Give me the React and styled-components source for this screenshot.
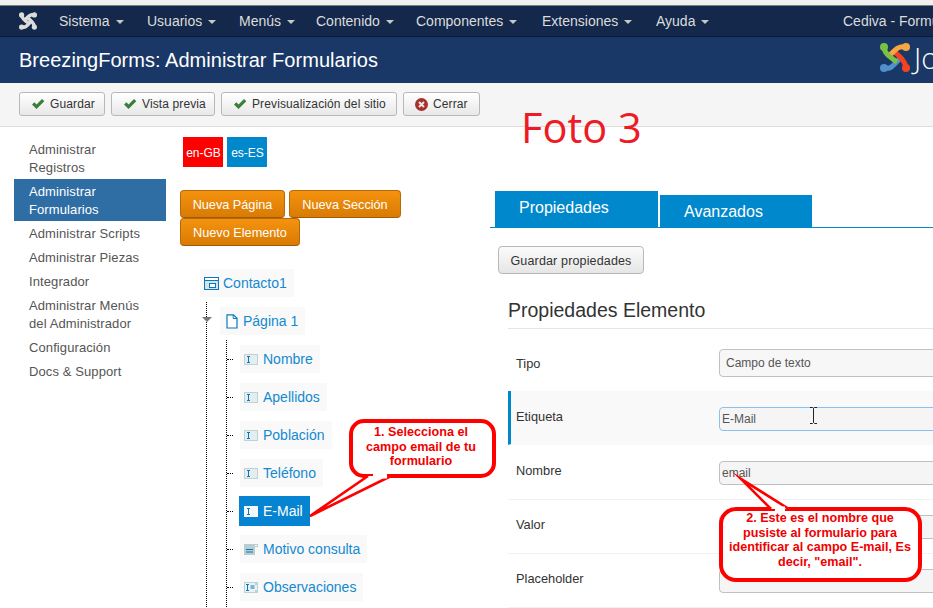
import React from "react";
import styled, { createGlobalStyle } from "styled-components";

const Global = createGlobalStyle`
  html, body { margin: 0; padding: 0; background: #fff; overflow: hidden; }
  body { font-family: "Liberation Sans", Arial, sans-serif; }
  * { box-sizing: border-box; }
  ul { list-style: none; margin: 0; padding: 0; }
`;

const Page = styled.div`
  position: relative;
  width: 933px;
  height: 608px;
  overflow: hidden;
  background: #fff;
`;
const BrowserEdge = styled.div`
  height: 6px;
  background: #f0f0f0;
  border-bottom: 1px solid #7d7d7d;
`;
const Navbar = styled.nav`
  height: 31px;
  display: flex;
  align-items: center;
  background: #13284a;
  border-bottom: 1px solid #0c1b33;
  color: #dcdcdc;
  font-size: 14px;
  padding-left: 19px;
  white-space: nowrap;
`;
const NavLogo = styled.svg`
  width: 18px;
  height: 18px;
  flex: none;
  margin-right: 22px;
`;
const NavItem = styled.span`
  display: inline-flex;
  align-items: center;
  width: ${(p) => p.$w}px;
  flex: none;
`;
const Caret = styled.i`
  display: inline-block;
  margin-left: 6px;
  margin-top: 2px;
  border-left: 4px solid transparent;
  border-right: 4px solid transparent;
  border-top: 4px solid #c8c8c8;
`;
const NavRight = styled.span`
  margin-left: 73px;
`;
const TitleBar = styled.header`
  height: 46px;
  display: flex;
  align-items: center;
  background: #1a3867;
  color: #fff;
  padding-left: 19px;
  white-space: nowrap;
`;
const PageTitle = styled.h1`
  margin: 0;
  font-size: 20px;
  letter-spacing: 0.03px;
  font-weight: 400;
  width: 861px;
  flex: none;
`;
const BrandLogo = styled.svg`
  width: 30px;
  height: 31px;
  flex: none;
  margin-bottom: 6px;
`;
const BrandText = styled.span`
  font-family: "Open Sans", sans-serif;
  font-weight: 300;
  font-size: 29px;
  margin-left: 4px;
  margin-bottom: 5px;
`;
const Toolbar = styled.div`
  height: 44px;
  display: flex;
  align-items: flex-start;
  gap: 6px;
  background: #f5f5f5;
  border-bottom: 1px solid #dedede;
  padding: 9px 0 0 19px;
`;
const ToolButton = styled.button`
  height: 24px;
  width: ${(p) => p.$w}px;
  display: inline-flex;
  align-items: center;
  gap: 5px;
  padding: 0 0 0 11px;
  font: 12px "Liberation Sans", Arial, sans-serif;
  letter-spacing: 0.12px;
  color: #333;
  background: linear-gradient(#ffffff, #e8e8e8);
  border: 1px solid #b8b8b8;
  border-radius: 3px;
  white-space: nowrap;
`;
const Main = styled.div`
  display: flex;
  align-items: flex-start;
`;
const Sidebar = styled.ul`
  width: 166px;
  flex: none;
  padding: 10px 0 0 14px;
`;
const SideItem = styled.li`
  padding: 4px 15px 2px;
  line-height: 18px;
  font-size: 13px;
  letter-spacing: 0.1px;
  color: ${(p) => (p.$active ? "#fff" : "#555")};
  background: ${(p) => (p.$active ? "#2f6ea5" : "transparent")};
`;
const Builder = styled.div`
  width: 324px;
  flex: none;
  padding: 10px 0 0 14px;
`;
const LangRow = styled.div`
  display: flex;
  gap: 4px;
  padding-left: 3px;
`;
const Lang = styled.span`
  width: 40px;
  height: 30px;
  display: flex;
  align-items: center;
  justify-content: center;
  padding: 1px 0 0 1px;
  font-size: 12px;
  color: #fff;
  background: ${(p) => p.$bg};
`;
const ActionRow = styled.div`
  display: flex;
  flex-wrap: wrap;
  column-gap: 4px;
  width: 225px;
  margin-top: 23px;
`;
const OrangeButton = styled.button`
  width: ${(p) => p.$w}px;
  height: 28px;
  padding: 1px 0 0;
  font: 12.7px "Liberation Sans", Arial, sans-serif;
  color: #fff;
  background: linear-gradient(#f5930f, #d97b04);
  border: 1px solid #b56a08;
  border-bottom-color: #a05c05;
  border-radius: 4px;
  white-space: nowrap;
`;
const Tree = styled.div`
  margin: 23px 0 0 20px;
`;
const Branch = styled.ul`
  position: relative;
  margin: 5px 0 0 6px;
  padding: 5px 0 30px 13px;
  border-left: 1px dotted #000;
`;
const Leaf = styled.li`
  position: relative;
  height: 28px;
  margin-bottom: 10px;
  &::before {
    content: "";
    position: absolute;
    left: -13px;
    top: 14px;
    width: 6px;
    border-top: 1px dotted #000;
  }
`;
const Node = styled.span`
  display: inline-flex;
  align-items: center;
  gap: ${(p) => p.$gap || 5}px;
  height: ${(p) => (p.$selected ? 30 : 28)}px;
  margin: ${(p) => (p.$selected ? "-1px 0 0 -1px" : 0)};
  padding: 0 7px 0 ${(p) => p.$pad || (p.$selected ? 5 : 4)}px;
  font-size: 14px;
  color: ${(p) => (p.$selected ? "#fff" : "#1489d0")};
  background: ${(p) => (p.$selected ? "#0784d1" : "#f9f9f9")};
  white-space: nowrap;
`;
const Arrow = styled.i`
  position: absolute;
  left: -5px;
  top: 15px;
  border-left: 5px solid transparent;
  border-right: 5px solid transparent;
  border-top: 5px solid #777;
`;
const Icon = styled.svg`
  flex: none;
  display: block;
`;
const Properties = styled.div`
  flex: 1;
  min-width: 0;
  padding-top: 64px;
`;
const Tabs = styled.div`
  display: flex;
  align-items: flex-end;
  gap: 2px;
  padding-left: 5px;
  border-bottom: 1px solid #0088cc;
  height: 37px;
`;
const Tab = styled.div`
  width: ${(p) => p.$w}px;
  height: ${(p) => p.$h}px;
  padding: 8px 0 0 24px;
  font-size: 16px;
  line-height: 18px;
  color: #fff;
  background: #0088cc;
`;
const SaveButton = styled.button`
  display: block;
  width: 146px;
  height: 28px;
  margin: 18px 0 0 8px;
  padding: 1px 0 0;
  font: 12.5px "Liberation Sans", Arial, sans-serif;
  letter-spacing: 0.15px;
  color: #333;
  background: linear-gradient(#fbfbfb, #e6e6e6);
  border: 1px solid #b8b8b8;
  border-radius: 4px;
`;
const Panel = styled.div`
  padding-left: 18px;
`;
const Heading = styled.h2`
  margin: 24px 0 9px;
  padding-bottom: 6px;
  font-size: 19.5px;
  line-height: 24px;
  font-weight: 400;
  color: #333;
  border-bottom: 1px solid #e5e5e5;
`;
const Row = styled.div`
  display: flex;
  align-items: flex-start;
  height: ${(p) => p.$h || 54}px;
  padding: ${(p) => p.$top || 16}px 0 0 ${(p) => (p.$active ? 5 : 8)}px;
  border-left: ${(p) => (p.$active ? "3px solid #0088cc" : "none")};
  border-bottom: 1px solid ${(p) => (p.$plain ? "transparent" : "#f2f2f2")};
  background: ${(p) => (p.$active ? "#f9f9f9" : "transparent")};
`;
const Label = styled.div`
  width: 203px;
  flex: none;
  padding-top: 1px;
  font-size: 12.8px;
  line-height: 18px;
  color: #333;
`;
const Field = styled.div`
  width: 400px;
  flex: none;
  height: ${(p) => (p.$tall ? 28 : 24)}px;
  margin-top: ${(p) => (p.$tall ? -5 : 0)}px;
  padding-left: ${(p) => (p.$tall ? 6 : 2)}px;
  font-size: 12px;
  line-height: ${(p) => (p.$tall ? 27 : 23)}px;
  color: #555;
  background: ${(p) => (p.$tall ? "#f7f7f7" : "#f5f5f5")};
  border: 1px solid ${(p) => (p.$focus ? "#89c2f0" : "#c0c0c0")};
  border-radius: 4px;
`;
const Cursor = styled.svg`
  position: absolute;
  left: 809px;
  top: 407px;
`;
const PhotoLabel = styled.div`
  position: absolute;
  left: 521px;
  top: 99px;
  font-family: "Open Sans", sans-serif;
  font-size: 41.5px;
  line-height: 56px;
  color: #ed1c24;
  white-space: nowrap;
`;
const Callout = styled.div`
  position: absolute;
  left: ${(p) => p.$x}px;
  top: ${(p) => p.$y}px;
  width: ${(p) => p.$w}px;
  text-align: center;
  font-size: 12.6px;
  font-weight: 700;
  line-height: 14.5px;
  color: #f00000;
  z-index: 3;
`;
const CalloutShape = styled.svg`
  position: absolute;
  z-index: 2;
  left: 0;
  top: 0;
`;

const knots = (c, w = 5, r = 4) => (
  <>
    <circle cx="4" cy="26" r={r} fill={c[3]} />
    <path d="M4 25C10 29 14 23 22 14" stroke={c[3]} strokeWidth={w} fill="none" />
    <circle cx="26" cy="26" r={r} fill={c[2]} />
    <path d="M26 25C25 19 20 14 12 8" stroke={c[2]} strokeWidth={w} fill="none" />
    <circle cx="26" cy="5" r={r} fill={c[1]} />
    <path d="M26 6C20 2 15 8 8 15" stroke={c[1]} strokeWidth={w} fill="none" />
    <circle cx="4" cy="5" r={r} fill={c[0]} />
    <path d="M4 6C5 12 10 15 17 20" stroke={c[0]} strokeWidth={w} fill="none" />
  </>
);

const Check = () => (
  <Icon width="14" height="12" viewBox="0 0 14 12">
    <path d="M1 6.5 3.4 4.3 5.5 6.6 11 1 13.3 3.2 5.5 11Z" fill="#37803a" />
  </Icon>
);
const CloseIcon = () => (
  <Icon width="13" height="13" viewBox="0 0 13 13">
    <circle cx="6.5" cy="6.5" r="6.5" fill="#a5322e" />
    <path d="M4 4 9 9M9 4 4 9" stroke="#f3e3e3" strokeWidth="2" />
  </Icon>
);
const FormIcon = () => (
  <Icon width="15" height="13" viewBox="0 0 15 13">
    <rect x=".5" y=".5" width="14" height="12" fill="#d5e3e8" stroke="#0a78bd" />
    <rect x="1" y="1" width="13" height="2.5" fill="#fff" />
    <path d="M.5 3.5h14" stroke="#0a78bd" />
    <rect x="5.5" y="6.5" width="6" height="4" fill="#fff" stroke="#0a78bd" />
  </Icon>
);
const PageIcon = () => (
  <Icon width="12" height="15" viewBox="0 0 12 15">
    <path d="M1 .8h6.5L11 4.3V14H1Z" fill="#fff" stroke="#0a78bd" strokeWidth="1.2" />
    <path d="M7.2 1v3.5H11" fill="none" stroke="#0a78bd" />
  </Icon>
);
const InputIcon = ({ light }) => (
  <Icon width="14" height="11" viewBox="0 0 14 11">
    <rect x=".5" y=".5" width="13" height="10" fill={light ? "#f2f7fa" : "#e4eef0"} stroke={light ? "#f2f7fa" : "#bfd2d4"} />
    <path d="M3 2.5h3M3 8.5h3M4.5 2.5v6" stroke="#0a78bd" fill="none" />
  </Icon>
);
const SelectIcon = () => (
  <Icon width="14" height="11" viewBox="0 0 14 11">
    <path d="M0 0h14v3h-3v8H0Z" fill="#b9cdd0" />
    <path d="M2 5.5h7M2 8h7" stroke="#0a78bd" />
    <rect x="11" y="1" width="2" height="1" fill="#fff" />
  </Icon>
);
const AreaIcon = () => (
  <Icon width="14" height="11" viewBox="0 0 14 11">
    <rect x=".5" y=".5" width="13" height="10" fill="#eaf2f4" stroke="#bfd2d4" />
    <path d="M2 2.5h3M2 8.5h3M3.5 2.5v6M6.5 4h4M6.5 6h4" stroke="#0a78bd" fill="none" />
    <path d="M12 1.5v1M12 8.5v1" stroke="#0a78bd" />
  </Icon>
);

const nav = [
  ["Sistema", 88],
  ["Usuarios", 92],
  ["Menús", 77],
  ["Contenido", 100],
  ["Componentes", 126],
  ["Extensiones", 114],
  ["Ayuda", 114],
];
const sideItems = [
  ["Administrar", "Registros"],
  ["Administrar", "Formularios"],
  ["Administrar Scripts"],
  ["Administrar Piezas"],
  ["Integrador"],
  ["Administrar Menús", "del Administrador"],
  ["Configuración"],
  ["Docs & Support"],
];
const leaves = [
  ["Nombre", InputIcon],
  ["Apellidos", InputIcon],
  ["Población", InputIcon],
  ["Teléfono", InputIcon],
  ["E-Mail", InputIcon, true],
  ["Motivo consulta", SelectIcon],
  ["Observaciones", AreaIcon],
];
const gray = ["#dcdcdc", "#dcdcdc", "#dcdcdc", "#dcdcdc"];

export default function App() {
  return (
    <Page>
      <Global />
      <BrowserEdge />
      <Navbar>
        <NavLogo viewBox="0 0 30 31">{knots(gray, 6, 4.5)}</NavLogo>
        {nav.map(([t, w]) => (
          <NavItem key={t} $w={w}>
            {t}
            <Caret />
          </NavItem>
        ))}
        <NavRight>Cediva - Formularios</NavRight>
      </Navbar>
      <TitleBar>
        <PageTitle>BreezingForms: Administrar Formularios</PageTitle>
        <BrandLogo viewBox="0 0 30 31">{knots(["#7ac143", "#f9a541", "#f44321", "#5091cd"])}</BrandLogo>
        <BrandText>Joomla!</BrandText>
      </TitleBar>
      <Toolbar>
        <ToolButton $w={86}><Check />Guardar</ToolButton>
        <ToolButton $w={104}><Check />Vista previa</ToolButton>
        <ToolButton $w={176}><Check />Previsualización del sitio</ToolButton>
        <ToolButton $w={77}><CloseIcon />Cerrar</ToolButton>
      </Toolbar>
      <Main>
        <Sidebar>
          {sideItems.map((lines, i) => (
            <SideItem key={i} $active={i === 1}>
              {lines.map((l) => (
                <div key={l}>{l}</div>
              ))}
            </SideItem>
          ))}
        </Sidebar>
        <Builder>
          <LangRow>
            <Lang $bg="#ff0000">en-GB</Lang>
            <Lang $bg="#0088cc">es-ES</Lang>
          </LangRow>
          <ActionRow>
            <OrangeButton $w={105}>Nueva Página</OrangeButton>
            <OrangeButton $w={112}>Nueva Sección</OrangeButton>
            <OrangeButton $w={120}>Nuevo Elemento</OrangeButton>
          </ActionRow>
          <Tree>
            <Node $gap={4}><FormIcon />Contacto1</Node>
            <Branch as="div">
              <Arrow />
              <Node $pad={6}><PageIcon />Página 1</Node>
              <Branch>
                {leaves.map(([t, Ico, sel]) => (
                  <Leaf key={t}>
                    <Node $selected={sel}>
                      <Ico light={sel} />
                      {t}
                    </Node>
                  </Leaf>
                ))}
              </Branch>
            </Branch>
          </Tree>
        </Builder>
        <Properties>
          <Tabs>
            <Tab $w={163} $h={36}>Propiedades</Tab>
            <Tab $w={152} $h={32}>Avanzados</Tab>
          </Tabs>
          <SaveButton>Guardar propiedades</SaveButton>
          <Panel>
            <Heading>Propiedades Elemento</Heading>
            <Row $h={53} $plain>
              <Label>Tipo</Label>
              <Field $tall>Campo de texto</Field>
            </Row>
            <Row $active $plain>
              <Label>Etiqueta</Label>
              <Field $focus>E-Mail</Field>
            </Row>
            <Row $h={55}>
              <Label>Nombre</Label>
              <Field>email</Field>
            </Row>
            <Row $top={15}>
              <Label>Valor</Label>
              <Field />
            </Row>
            <Row $top={15}>
              <Label>Placeholder</Label>
              <Field />
            </Row>
          </Panel>
        </Properties>
      </Main>
      <Cursor width="9" height="17" viewBox="0 0 9 17">
        <path d="M1 .5h2.5L4.5 1.5 5.5.5H8M4.5 1.5v14M1 16.5h2.5l1-1 1 1H8" fill="none" stroke="#222" />
      </Cursor>
      <PhotoLabel>Foto 3</PhotoLabel>
      <CalloutShape width="933" height="608" viewBox="0 0 933 608">
        <rect x="351" y="421" width="143" height="55" rx="13" fill="#fff" stroke="#ff0000" strokeWidth="4" />
        <path d="M368 476 310 516 391 476" fill="#fff" stroke="#ff0000" strokeWidth="2.6" strokeMiterlimit="12" />
        <path d="M373 476H387" stroke="#fff" strokeWidth="5" />
        <rect x="721" y="509" width="199" height="71" rx="15" fill="#fff" stroke="#ff0000" strokeWidth="4" />
        <path d="M771 509 741 479 789 509" fill="#fff" stroke="#ff0000" strokeWidth="2.6" strokeMiterlimit="12" />
        <path d="M775 509H785" stroke="#fff" strokeWidth="5" />
      </CalloutShape>
      <Callout $x={351} $y={425} $w={140}>
        1. Selecciona el<br />campo email de tu<br />formulario
      </Callout>
      <Callout $x={722} $y={511} $w={196}>
        2. Este es el nombre que<br />pusiste al formulario para<br />identificar al campo E-mail, Es<br />decir, "email".
      </Callout>
    </Page>
  );
}
